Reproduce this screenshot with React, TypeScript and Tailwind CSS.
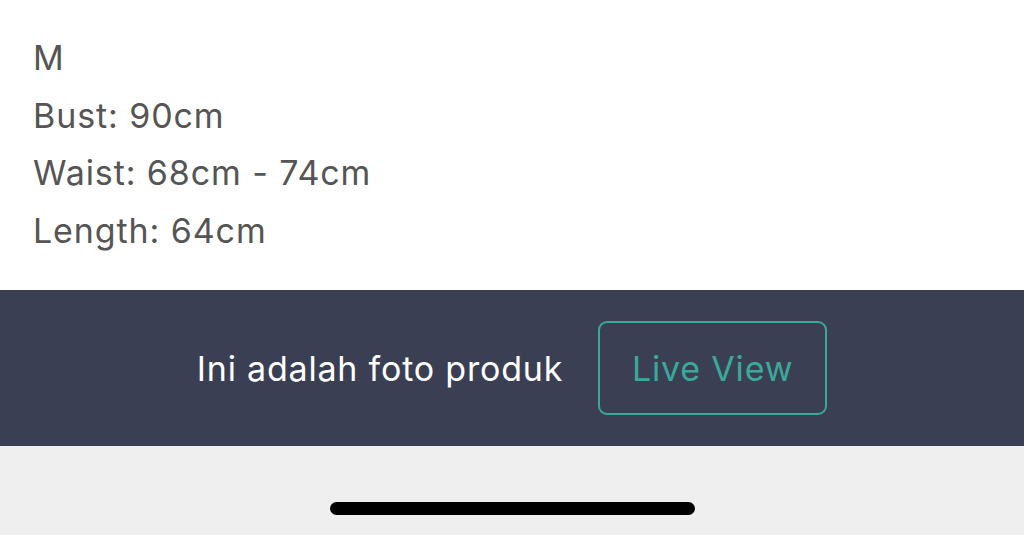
export default function App() {
  const lines = ["M", "Bust: 90cm", "Waist: 68cm - 74cm", "Length: 64cm"];
  return (
    <div
      className="w-[1024px] h-[535px] flex flex-col overflow-hidden bg-white"
      style={{ fontFamily: "Inter, 'Noto Sans', sans-serif" }}
    >
      <div className="h-[290px] pl-[33px] pt-[29px] text-[#555555] text-[34px] leading-[57.5px] tracking-[0.9px]">
        {lines.map((l) => (
          <div key={l}>{l}</div>
        ))}
      </div>
      <div className="h-[156px] bg-[#3b3f54] flex items-center justify-center gap-[35px]">
        <span className="text-white text-[34px] tracking-[0.8px]">Ini adalah foto produk</span>
        <button className="w-[229px] h-[94px] rounded-[9px] border-2 border-[#3aa99a] text-[#3aa99a] text-[34px] tracking-[0.8px]">
          Live View
        </button>
      </div>
      <div className="flex-1 bg-[#efefef] flex justify-center pt-[56px]">
        <div className="w-[365px] h-[13px] rounded-full bg-black" />
      </div>
    </div>
  );
}
